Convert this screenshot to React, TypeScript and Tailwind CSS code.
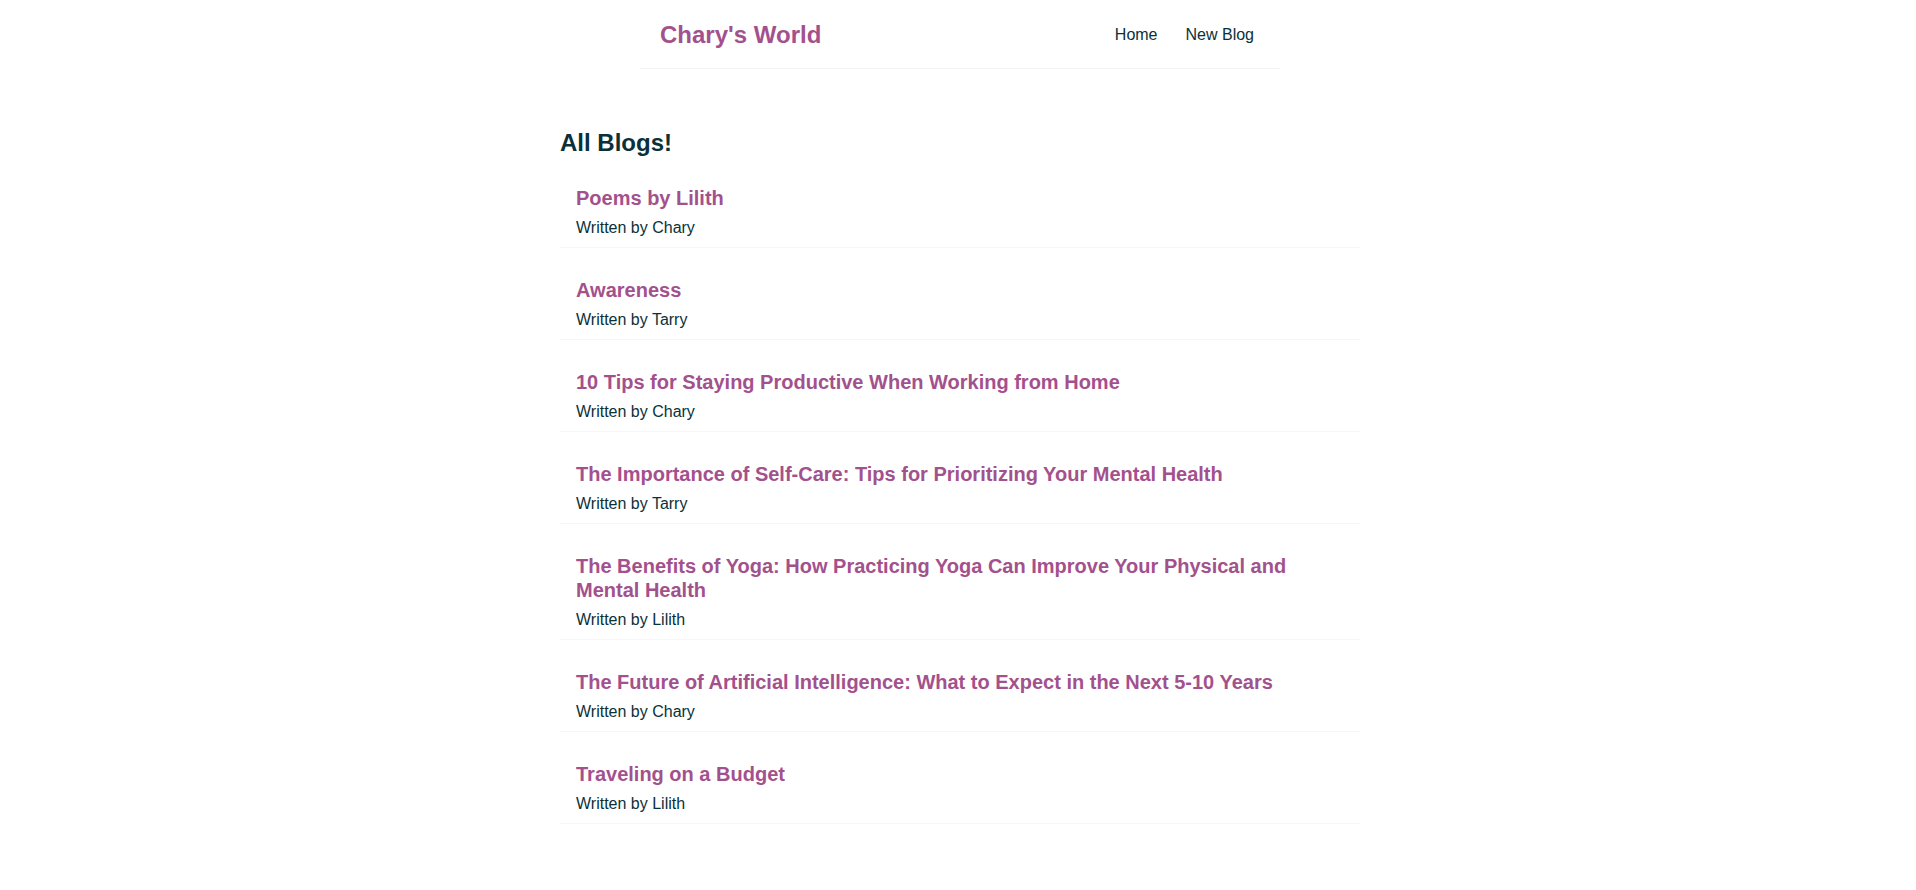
const blogs = [
    { id: 1, title: 'Poems by Lilith', author: 'Chary' },
    { id: 2, title: 'Awareness', author: 'Tarry' },
    { id: 3, title: '10 Tips for Staying Productive When Working from Home', author: 'Chary' },
    { id: 4, title: 'The Importance of Self-Care: Tips for Prioritizing Your Mental Health', author: 'Tarry' },
    { id: 5, title: 'The Benefits of Yoga: How Practicing Yoga Can Improve Your Physical and Mental Health', author: 'Lilith' },
    { id: 6, title: 'The Future of Artificial Intelligence: What to Expect in the Next 5-10 Years', author: 'Chary' },
    { id: 7, title: 'Traveling on a Budget', author: 'Lilith' },
];

const Navbar = () => (
    <nav className="max-w-[640px] mx-auto px-5 pt-[21px] pb-[19px] flex items-center border-b border-[#f2f2f2]">
        <h1 className="text-2xl font-bold leading-[1.15] text-[#a3518d]">Chary's World</h1>
        <div className="ml-auto flex items-center">
            <a href="#" className="ml-4 px-1.5 text-base leading-[1.15] text-[#0a3139]">Home</a>
            <a href="#" className="ml-4 px-1.5 text-base leading-[1.15] text-[#0a3139]">New Blog</a>
        </div>
    </nav>
);

const App = () => {
    return (
        <div className="min-h-screen bg-white pl-1 font-['Liberation_Sans',Arial,sans-serif] text-[#0a3139]">
            <Navbar />
            <div className="max-w-[840px] mx-auto mt-10 p-5">
                <h2 className="text-2xl font-bold leading-[1.15] text-[#0a3139]">All Blogs!</h2>
                <div className="flex flex-col gap-5 mt-5">
                    {blogs.map((blog) => (
                        <div key={blog.id} className="px-4 py-2.5 border-b border-[#f7f7f7]">
                            <h2 className="text-xl font-bold leading-6 text-[#a3518d] mb-[9px]">{blog.title}</h2>
                            <p className="text-base leading-[18px]">Written by {blog.author}</p>
                        </div>
                    ))}
                </div>
            </div>
        </div>
    );
};

export default App;
